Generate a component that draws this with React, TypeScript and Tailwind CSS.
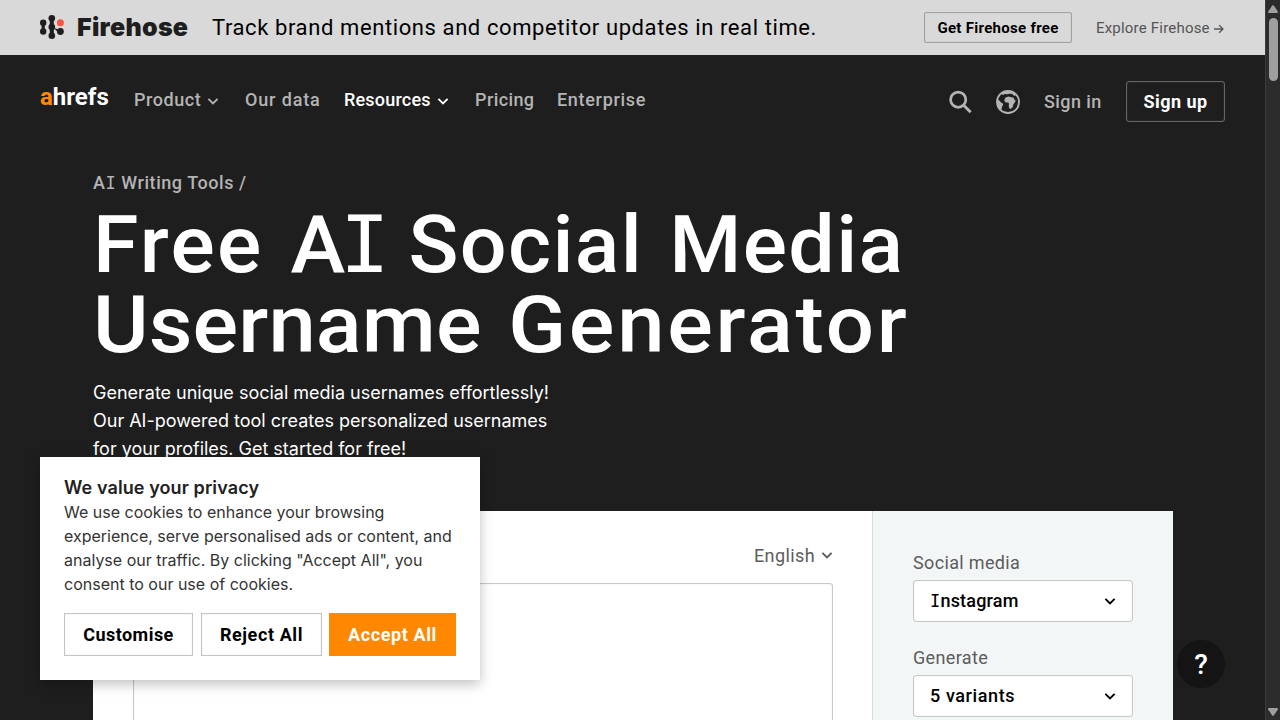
import React from "react";

const Chevron: React.FC<{ className?: string }> = ({ className }) => (
  <svg
    viewBox="0 0 12 12"
    fill="none"
    stroke="currentColor"
    strokeWidth="1.9"
    className={`h-3 w-3 shrink-0 ${className ?? ""}`}
  >
    <path d="M1.4 3.8 6 8.4l4.6-4.6" />
  </svg>
);

const FirehoseMark = () => (
  <svg viewBox="0 0 24 24" className="h-6 w-6 -translate-y-px fill-[#1e1e1e]">
    <circle cx="3.2" cy="7.8" r="3.2" />
    <circle cx="3.2" cy="16.5" r="3.2" />
    <path d="M1.6 9h3.2v7H1.6z" />
    <circle cx="11.8" cy="3.3" r="3.3" />
    <circle cx="11.8" cy="12.1" r="3.3" />
    <circle cx="11.8" cy="20.7" r="3.3" />
    <path d="M9.8 4h4v17h-4z" />
    <circle cx="20.4" cy="16.5" r="3.4" />
    <path d="M13 12.6l6.4 2.4-1 2.4z" />
    <circle cx="20.4" cy="7.8" r="3.5" className="fill-[#fa5541]" />
  </svg>
);

const SearchIcon = () => (
  <svg viewBox="0 0 24 24" fill="none" stroke="currentColor" strokeWidth="2.7" className="h-6 w-6">
    <circle cx="10.2" cy="9.7" r="7.6" />
    <path d="m15.6 15.2 7 7" strokeWidth="3" />
  </svg>
);

const GlobeIcon = () => (
  <svg viewBox="0 0 24 24" fill="currentColor" className="h-6 w-6">
    <circle cx="12" cy="12" r="11" fill="none" stroke="currentColor" strokeWidth="1.8" />
    <path d="M1.5 9.8 3.4 10.6l1.6 2 1.6.6.6 1.6-1.2 2-.4 2.6-1.6.6C2.3 18 .8 14 1.5 9.8z" />
    <path d="M5.4 3.8 9.2 1.4l6-.3 4.4 2.6-.2 2.3-1.6-.4-1.6-1.6-2.5-.3-2.6.5-2.2-.1-2.2.8z" />
    <path d="m10 7.2 2.8-.8 2 .8 2.6.2 1.2 2.6 1.2.5-1.2 2.3-1.3 1.6-.3 2-1.9 2.4h-1.4l-1-2.4.3-2.6-.8-1.2-2.4-.2-1.5-1.6.4-2.1z" />
  </svg>
);

const NAV = [
  { label: "Product", menu: true, className: "w-[111px] tracking-[0.55px] text-[#b4b4b4]" },
  { label: "Our data", className: "w-[99px] tracking-[0.85px] text-[#b4b4b4]" },
  { label: "Resources", menu: true, className: "w-[131px] tracking-[0.2px] text-white" },
  { label: "Pricing", className: "w-[82px] tracking-[0.4px] text-[#b4b4b4]" },
  { label: "Enterprise", className: "w-[90px] tracking-[0.7px] text-[#b4b4b4]" },
];

const Banner = () => (
  <div className="flex h-[55px] items-center bg-[#d9d9d9] px-10">
    <FirehoseMark />
    <div className="-mt-0.5 ml-[13px] w-[135px] font-['Inter'] text-[25px] leading-6 font-black tracking-[0.3px] text-[#1e1e1e]">
      Firehose
    </div>
    <div className="flex-1 text-[22px] tracking-[0.6px] text-black">
      Track brand mentions and competitor updates in real time.
    </div>
    <button className="h-[31px] w-[148px] rounded-xs border border-[#a2a2a2] pt-px text-[15px] font-bold tracking-[0.3px] text-black shadow-[inset_0_0_1px_#a2a2a2]">
      Get Firehose free
    </button>
    <a className="ml-6 w-[129px] pt-0.5 text-[15px] tracking-[0.2px] text-[#555]">
      Explore Firehose{" "}
      <svg viewBox="0 0 10 10" fill="none" stroke="currentColor" strokeWidth="1.3" className="inline h-2.5 w-2.5 align-[-1px]">
        <path d="M0 5h9M5.2 1.2 9 5 5.2 8.8" />
      </svg>
    </a>
  </div>
);

const Header = () => (
  <header className="flex h-[91px] items-center px-10 text-lg font-medium">
    <div className="mt-[-8px] w-[94px] text-[24px] leading-7 font-bold text-white">
      <span className="text-[#ff8800]">a</span>hrefs
    </div>
    <nav className="-mt-0.5 flex flex-1">
      {NAV.map((item) => (
        <a key={item.label} className={`flex items-center gap-1.5 ${item.className}`}>
          {item.label}
          {item.menu && <Chevron className="mt-0.5" />}
        </a>
      ))}
    </nav>
    <div className="mt-0.5 flex items-center text-[#b4b4b4]">
      <SearchIcon />
      <div className="ml-6">
        <GlobeIcon />
      </div>
      <a className="ml-6 w-[82px] tracking-[0.4px]">Sign in</a>
      <button className="h-[41px] w-[99px] rounded-[3px] border border-[#666] font-bold tracking-[0.45px] text-white shadow-[inset_0_0_1px_#666]">
        Sign up
      </button>
    </div>
  </header>
);

const Select: React.FC<{ label: string; children: React.ReactNode }> = ({ label, children }) => (
  <div className="h-[95px] w-[220px]">
    <div className="h-[29px] text-lg leading-6 tracking-[0.35px] text-[#5c5c5c]">{label}</div>
    <button className="flex h-[42px] w-full items-center justify-between rounded-[3px] border border-[#c8c8c8] bg-white px-4 text-lg font-medium tracking-[0.2px] text-black shadow-[inset_0_0_1px_#c8c8c8]">
      <span>{children}</span>
      <Chevron />
    </button>
  </div>
);

const CookieDialog = () => (
  <div className="absolute top-[457px] left-10 h-[223px] w-[440px] bg-white px-6 pt-[19px] shadow-[0_4px_12px_rgba(0,0,0,0.25)]">
    <h2 className="font-['Inter'] text-lg leading-6 font-semibold tracking-[0.1px] text-[#212121]">
      We value your privacy
    </h2>
    <p className="font-['Inter'] text-base leading-6 text-[#333]">
      We use cookies to enhance your browsing
      <br />
      experience, serve personalised ads or content, and
      <br />
      analyse our traffic. By clicking "Accept All", you
      <br />
      consent to our use of cookies.
    </p>
    <div className="mt-[17px] flex gap-2 text-lg font-bold text-black">
      <button className="h-[43px] w-[129px] border border-[#c4c4c4] tracking-[0.45px] shadow-[inset_0_0_1px_#c4c4c4]">
        Customise
      </button>
      <button className="h-[43px] w-[121px] border border-[#c4c4c4] tracking-[0.6px] shadow-[inset_0_0_1px_#c4c4c4]">
        Reject All
      </button>
      <button className="-ml-px h-[43px] w-[127px] bg-[#ff8800] tracking-[0.6px] text-white">Accept All</button>
    </div>
  </div>
);

const Scrollbar = () => (
  <div className="flex h-full w-[15px] flex-col items-center justify-between border-l border-[#3c3c3c] bg-[#2c2c2c] pt-[5px] pb-1">
    <div className="flex flex-col items-center gap-[5px]">
      <svg viewBox="0 0 10 8" className="h-2 w-2.5 fill-[#9f9f9f]">
        <path d="M4.2.6Q5 0 5.8.6L10 6.8Q10 8 9 8H1Q0 8 0 6.8z" />
      </svg>
      <div className="h-[63px] w-[9px] rounded-full bg-[#9f9f9f]" />
    </div>
    <svg viewBox="0 0 10 8" className="h-2 w-2.5 fill-[#9f9f9f]">
      <path d="M4.2 7.4Q5 8 5.8 7.4L10 1.2Q10 0 9 0H1Q0 0 0 1.2z" />
    </svg>
  </div>
);

export default function App() {
  return (
    <div className="relative flex h-[720px] w-[1280px] overflow-hidden bg-[#1e1e1e] font-['Roboto',sans-serif] whitespace-nowrap">
      <div className="h-full flex-1">
        <Banner />
        <Header />
        <main className="ml-[93px] w-[1080px]">
          <div className="pt-[25px] text-lg leading-6 font-medium tracking-[0.55px] text-[#b4b4b4]">
            A<span className="font-['DejaVu_Sans_Mono'] text-[17px]">I</span> Writing Tools /
          </div>
          <h1 className="mt-2.5 h-[160px] text-[79px] leading-[80px] font-medium text-white">
            <div className="origin-left scale-x-[1.045] tracking-[1.3px] [word-spacing:4px]">
              <span className="tracking-[2.2px]">Free </span>
              <span className="tracking-[-5px]">A</span>
              <span className="font-['DejaVu_Sans_Mono'] tracking-[-7px]">I</span> Social Media
            </div>
            <div className="origin-left scale-x-[1.076] [word-spacing:5px]">
              <span className="tracking-[0.1px]">Username </span>
              <span className="tracking-[2.6px]">Generator</span>
            </div>
          </h1>
          <p className="mt-3.5 h-[132px] font-['Inter'] text-lg leading-7 tracking-[-0.01px] text-white">
            Generate unique social media usernames effortlessly!
            <br />
            Our AI-powered tool creates personalized usernames
            <br />
            for your profiles. Get started for free!
          </p>
          <div className="flex h-[240px] bg-white">
            <div className="w-[780px] border-r border-[#dadada] pt-[33px] pr-[39px] pl-10">
              <div className="flex h-[39px] items-start justify-end gap-1.5 text-lg leading-6 tracking-[0.4px] text-[#5c5c5c]">
                English
                <Chevron className="mt-[5px]" />
              </div>
              <div className="h-[200px] rounded-[3px] border border-[#c8c8c8] shadow-[inset_0_0_1px_#c8c8c8]" />
            </div>
            <div className="w-[300px] bg-[#f3f6f7] pt-10 pl-10">
              <Select label="Social media">
                <span className="font-['DejaVu_Sans_Mono'] text-[17px]">I</span>nstagram
              </Select>
              <Select label="Generate">
                <span className="tracking-[0.6px]">5 variants</span>
              </Select>
            </div>
          </div>
        </main>
      </div>
      <Scrollbar />
      <CookieDialog />
      <button className="absolute top-[640px] left-[1177px] h-12 w-12 rounded-full bg-[#141414] pt-0.5 text-[28px] font-medium text-white">
        ?
      </button>
    </div>
  );
}
